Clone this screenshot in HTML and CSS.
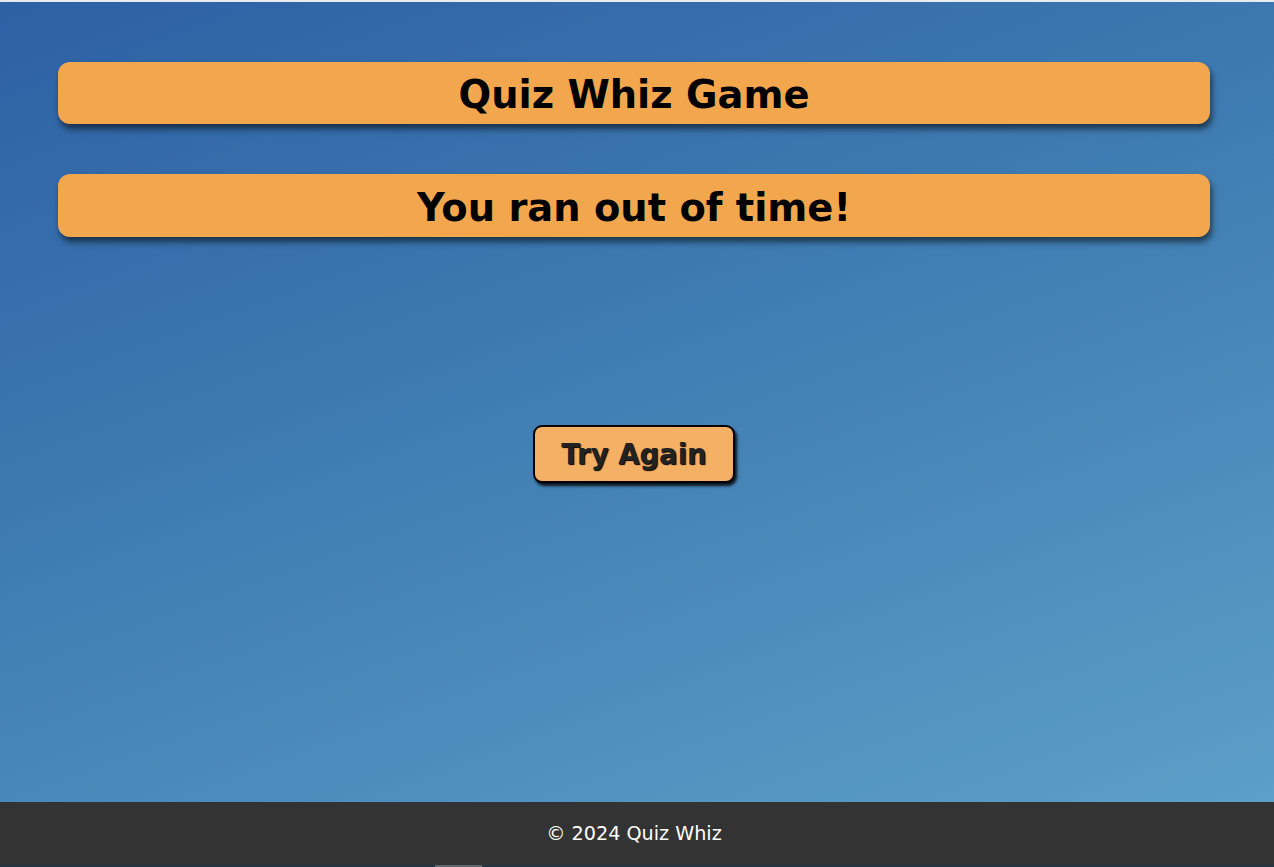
FILE: index.html
```html
<!DOCTYPE html>
<html lang="en">
<head>
<meta charset="utf-8">
<title>Quiz Whiz Game</title>
<link rel="stylesheet" href="styles.css">
</head>
<body>
<div class="topline"></div>
<main class="stage">
  <h1 class="panel title">Quiz Whiz Game</h1>
  <h2 class="panel message">You ran out of time!</h2>
  <div class="actions">
    <button class="retry" type="button">Try Again</button>
  </div>
</main>
<footer class="footer">
  <p class="copy">© 2024 Quiz Whiz</p>
</footer>
<div class="bottomline"><span class="bottomtab"></span></div>
</body>
</html>
```

FILE: styles.css
```css
html, body {
  margin: 0;
  padding: 0;
}
body {
  font-family: "DejaVu Sans", Verdana, sans-serif;
  background: #1f3447;
  width: 1274px;
  height: 867px;
  overflow: hidden;
}
.topline {
  height: 2px;
  background: #e9ecef;
}
.stage {
  height: 800px;
  box-sizing: border-box;
  padding: 60px 64px 0 58px;
  background: linear-gradient(160deg, #2d60a4 0%, #3f7cb2 45%, #5c9fc8 100%);
  display: flex;
  flex-direction: column;
}
.panel {
  margin: 0;
  background: #f2a74e;
  border-radius: 12px;
  color: #000;
  font-weight: bold;
  text-align: center;
  box-shadow: 2px 5px 6px rgba(0, 0, 0, 0.55);
}
.title {
  height: 62px;
  font-size: 38.4px;
  line-height: 66px;
}
.message {
  margin-top: 50px;
  height: 63px;
  font-size: 38.4px;
  line-height: 67px;
}
.actions {
  display: flex;
  justify-content: center;
  margin-top: 188px;
}
.retry {
  width: 202px;
  height: 58px;
  box-sizing: border-box;
  background: #f4b064;
  border: 2px solid #000;
  border-radius: 9px;
  font-family: "DejaVu Sans", Verdana, sans-serif;
  font-weight: bold;
  font-size: 27.5px;
  color: #222;
  text-shadow: 1px 1px 1px #000;
  box-shadow: 2px 3px 3px rgba(0, 0, 0, 0.85);
  padding: 0;
  cursor: pointer;
}
.footer {
  height: 63px;
  background: #333;
  display: flex;
  align-items: center;
  justify-content: center;
  padding-right: 6px;
}
.copy {
  margin: 0;
  color: #fff;
  font-size: 19.2px;
}
.bottomline {
  height: 2px;
  background: #1f3447;
  position: relative;
}
.bottomtab {
  position: absolute;
  left: 435px;
  top: 0;
  width: 47px;
  height: 2px;
  background: #5a6670;
}
```
